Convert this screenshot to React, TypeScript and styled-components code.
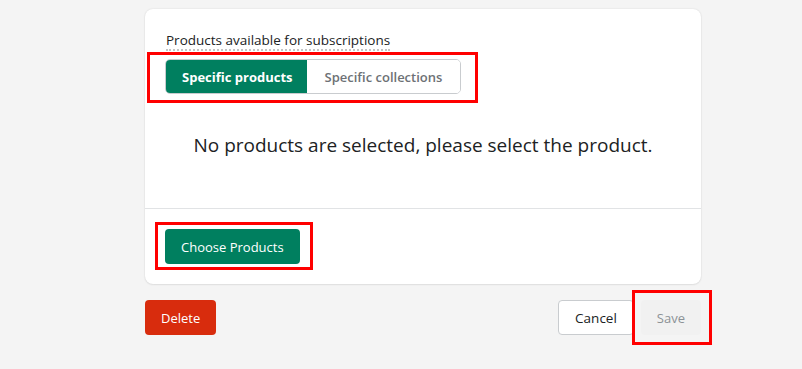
import React from 'react'
import styled, { createGlobalStyle } from 'styled-components'

const GlobalStyle = createGlobalStyle`
  html, body {
    margin: 0;
    padding: 0;
    background: #f4f4f4;
    font-family: "Open Sans", "Noto Sans", sans-serif;
    color: #202223;
  }
`

const Page = styled.div`
  padding: 9px 0 40px 145px;
  width: 556px;
`

const Card = styled.div`
  background: #fff;
  border-radius: 8px;
  box-shadow: 0 0 2px rgba(0, 0, 0, 0.12), 0 1px 2px rgba(0, 0, 0, 0.06);
`

const Section = styled.div`
  padding: 22px 20px 20px;
`

const Footer = styled.div`
  padding: 20px;
  border-top: 1px solid #e1e3e5;
`

const Label = styled.div`
  width: fit-content;
  font-size: 13.5px;
  font-weight: 400;
  line-height: 18px;
  margin: 0 0 8px 1px;
  border-bottom: 2px dotted #c4c4c4;
`

const Highlight = styled.div<{ $t: number; $r: number; $b: number; $l: number }>`
  position: relative;
  display: inline-flex;
  &::after {
    content: '';
    position: absolute;
    top: ${p => -p.$t}px;
    right: ${p => -p.$r}px;
    bottom: ${p => -p.$b}px;
    left: ${p => -p.$l}px;
    border: 3px solid #f00;
    pointer-events: none;
  }
`

const Row = styled.div`
  display: flex;
`

const Segmented = styled.div`
  display: flex;
  height: 35px;
  border: 1px solid #c9cccf;
  border-radius: 5px;
  overflow: hidden;
  box-sizing: border-box;
`

const Segment = styled.button<{ $active?: boolean }>`
  border: none;
  margin: 0;
  font-family: inherit;
  font-size: 13px;
  font-weight: ${p => (p.$active ? 700 : 600)};
  padding: 0 ${p => (p.$active ? 14 : 18)}px 0 ${p => (p.$active ? 16 : 18)}px;
  background: ${p => (p.$active ? '#007f5f' : '#fff')};
  color: ${p => (p.$active ? '#fff' : '#6d7175')};
`

const Empty = styled.p`
  margin: 0;
  padding: 37px 0 29px;
  text-align: center;
  font-size: 19px;
  line-height: 28px;
  color: #202223;
`

const Button = styled.button<{ $variant?: 'primary' | 'danger' | 'default' | 'disabled' }>`
  height: 35px;
  padding: 0 16px;
  border-radius: 4px;
  font-family: inherit;
  font-size: ${p => (p.$variant === 'default' ? 13.5 : 13)}px;
  box-sizing: border-box;
  border: ${p => (p.$variant === 'default' ? '1px solid #c9cccf' : 'none')};
  background: ${p =>
    p.$variant === 'primary'
      ? '#007f5f'
      : p.$variant === 'danger'
      ? '#d82c0d'
      : p.$variant === 'disabled'
      ? '#f1f1f1'
      : '#fff'};
  color: ${p =>
    p.$variant === 'disabled' ? '#8c9196' : p.$variant === 'default' ? '#202223' : '#fff'};
`

const Actions = styled.div`
  display: flex;
  justify-content: space-between;
  align-items: center;
  margin-top: 16px;
`

const Group = styled.div`
  display: flex;
  gap: 7px;
`

export default function App() {
  return (
    <>
      <GlobalStyle />
      <Page>
        <Card>
          <Section>
            <Label>Products available for subscriptions</Label>
            <Row>
              <Highlight $t={7} $r={17} $b={9} $l={18}>
                <Segmented>
                  <Segment $active>Specific products</Segment>
                  <Segment>Specific collections</Segment>
                </Segmented>
              </Highlight>
            </Row>
            <Empty>No products are selected, please select the product.</Empty>
          </Section>
          <Footer>
            <Row>
              <Highlight $t={7} $r={13} $b={6} $l={10}>
                <Button $variant="primary">Choose Products</Button>
              </Highlight>
            </Row>
          </Footer>
        </Card>
        <Actions>
          <Button $variant="danger">Delete</Button>
          <Group>
            <Button $variant="default">Cancel</Button>
            <Highlight $t={10} $r={11} $b={10} $l={9}>
              <Button $variant="disabled">Save</Button>
            </Highlight>
          </Group>
        </Actions>
      </Page>
    </>
  )
}
